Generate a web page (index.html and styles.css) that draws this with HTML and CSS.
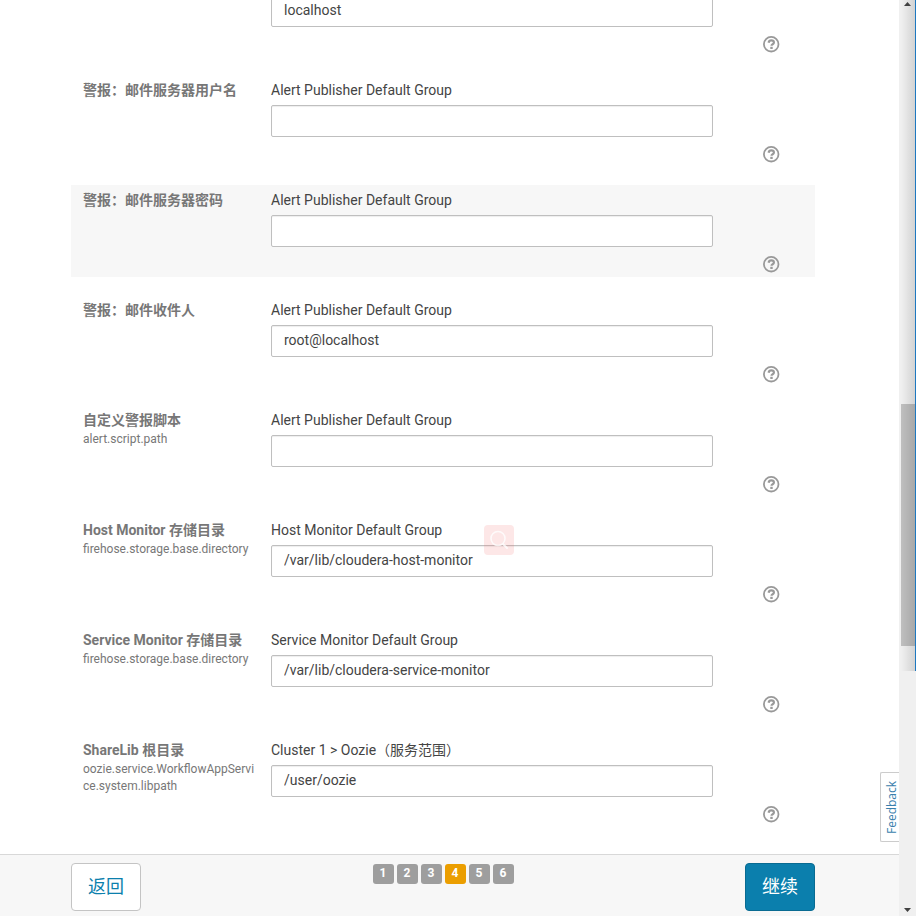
FILE: index.html
```html
<!DOCTYPE html>
<html lang="zh-CN">
<head>
<meta charset="utf-8">
<title>Cluster Setup</title>
<link rel="stylesheet" href="styles.css">
</head>
<body>
<svg class="sprite" aria-hidden="true">
  <symbol id="help" viewBox="0 0 17 17">
    <circle cx="8.2" cy="8.2" r="7.3" fill="none" stroke="currentColor" stroke-width="1.8"/>
    <path d="M5.600 6.700C5.900 5.100 6.900 4.400 8.300 4.400c1.600 0 2.600.8 2.600 2.100 0 1.800-2.400 1.700-2.400 3.300" fill="none" stroke="currentColor" stroke-width="2.2"/>
    <rect x="7.300" y="10.800" width="2.400" height="2.200" fill="currentColor"/>
  </symbol>
</svg>
<div class="window">
  <div class="page">
    <main class="content">
      <section class="row">
        <div class="name"></div>
        <div class="field"><input class="input" type="text" aria-label="邮件服务器" value="localhost"></div>
        <button class="help" type="button" aria-label="帮助"><svg class="help-icon"><use href="#help"/></svg></button>
      </section>
      <section class="row">
        <div class="name"><h2 class="title">警报：邮件服务器用户名</h2></div>
        <div class="field"><label class="group" for="f1">Alert Publisher Default Group</label><input class="input" id="f1" type="text"></div>
        <button class="help" type="button" aria-label="帮助"><svg class="help-icon"><use href="#help"/></svg></button>
      </section>
      <section class="row row-active">
        <div class="name"><h2 class="title">警报：邮件服务器密码</h2></div>
        <div class="field"><label class="group" for="f2">Alert Publisher Default Group</label><input class="input" id="f2" type="password"></div>
        <button class="help" type="button" aria-label="帮助"><svg class="help-icon"><use href="#help"/></svg></button>
      </section>
      <section class="row">
        <div class="name"><h2 class="title">警报：邮件收件人</h2></div>
        <div class="field"><label class="group" for="f3">Alert Publisher Default Group</label><input class="input" id="f3" type="text" value="root@localhost"></div>
        <button class="help" type="button" aria-label="帮助"><svg class="help-icon"><use href="#help"/></svg></button>
      </section>
      <section class="row">
        <div class="name"><h2 class="title">自定义警报脚本</h2><p class="key">alert.script.path</p></div>
        <div class="field"><label class="group" for="f4">Alert Publisher Default Group</label><input class="input" id="f4" type="text"></div>
        <button class="help" type="button" aria-label="帮助"><svg class="help-icon"><use href="#help"/></svg></button>
      </section>
      <section class="row">
        <div class="name"><h2 class="title">Host Monitor 存储目录</h2><p class="key">firehose.storage.base.directory</p></div>
        <div class="field">
          <label class="group" for="f5">Host Monitor Default Group</label><input class="input" id="f5" type="text" value="/var/lib/cloudera-host-monitor">
          <span class="search-badge">
            <svg class="search-icon" viewBox="0 0 30 30" aria-hidden="true"><circle cx="14" cy="13.500" r="7" fill="none" stroke="#fff" stroke-width="1.6"/><path d="M19 19l4 4" stroke="#fff" stroke-width="2" stroke-linecap="round"/></svg>
          </span>
        </div>
        <button class="help" type="button" aria-label="帮助"><svg class="help-icon"><use href="#help"/></svg></button>
      </section>
      <section class="row">
        <div class="name"><h2 class="title">Service Monitor 存储目录</h2><p class="key">firehose.storage.base.directory</p></div>
        <div class="field"><label class="group" for="f6">Service Monitor Default Group</label><input class="input" id="f6" type="text" value="/var/lib/cloudera-service-monitor"></div>
        <button class="help" type="button" aria-label="帮助"><svg class="help-icon"><use href="#help"/></svg></button>
      </section>
      <section class="row">
        <div class="name"><h2 class="title">ShareLib 根目录</h2><p class="key">oozie.service.WorkflowAppService.system.libpath</p></div>
        <div class="field"><label class="group" for="f7">Cluster 1 &gt; Oozie（服务范围）</label><input class="input" id="f7" type="text" value="/user/oozie"></div>
        <button class="help" type="button" aria-label="帮助"><svg class="help-icon"><use href="#help"/></svg></button>
      </section>
    </main>
    <footer class="footer">
      <button class="btn" type="button">返回</button>
      <ol class="steps">
        <li class="step">1</li>
        <li class="step">2</li>
        <li class="step">3</li>
        <li class="step step-current" aria-current="step">4</li>
        <li class="step">5</li>
        <li class="step">6</li>
      </ol>
      <button class="btn btn-primary" type="button">继续</button>
    </footer>
    <a class="feedback" href="#feedback">Feedback</a>
  </div>
  <div class="scrollbar" aria-hidden="true">
    <div class="edge"></div>
    <svg class="arrow" viewBox="0 0 7 4"><path d="M0 4L3.500 0L7 4z" fill="#404040"/></svg>
    <div class="track"><div class="thumb"></div></div>
    <svg class="arrow" viewBox="0 0 7 4"><path d="M0 0L3.500 4L7 0z" fill="#404040"/></svg>
  </div>
</div>
</body>
</html>
```
FILE: styles.css
```css
* {
  box-sizing: border-box;
}

body {
  margin: 0;
  background: #fff;
  color: #444;
  font: 14px/20px Roboto, "Noto Sans CJK SC", sans-serif;
}

.sprite {
  display: none;
}

.window {
  display: flex;
  height: 100vh;
  overflow: hidden;
}

.page {
  position: relative;
  display: flex;
  flex: 1;
  flex-direction: column;
  min-width: 0;
}

.content {
  display: flex;
  flex: 1;
  flex-direction: column;
  justify-content: flex-end;
  gap: 18px;
  min-height: 0;
  padding: 0 84px 27px 71px;
  overflow: hidden;
}

.row {
  display: grid;
  flex-shrink: 0;
  grid-template-columns: 188px 1fr 102px;
  padding: 5px 0 0 12px;
}

.row-active {
  background: #f7f7f7;
}

.name {
  padding-right: 16px;
}

.title {
  margin: 0;
  color: #777;
  font-size: 14px;
  font-weight: 700;
  line-height: 20px;
}

.key {
  margin: 1px 0 0;
  color: #777;
  font-size: 12px;
  line-height: 17px;
  overflow-wrap: anywhere;
}

.field {
  position: relative;
  display: flex;
  flex-direction: column;
  gap: 5px;
  padding-bottom: 30px;
}

.input {
  width: 100%;
  height: 32px;
  margin: 0;
  padding: 0 12px 2px;
  border: 1px solid #bfbfbf;
  border-radius: 2px;
  outline: 0;
  background: #fff;
  box-shadow: inset 0 1px 1px #eee;
  color: #444;
  font: inherit;
}

.help {
  align-self: end;
  justify-self: start;
  width: 17px;
  height: 17px;
  margin: 0 0 4px 50px;
  padding: 0;
  border: 0;
  background: none;
  color: #999;
}

.help-icon {
  display: block;
  width: 17px;
  height: 17px;
}

.search-badge {
  position: absolute;
  top: 5px;
  left: calc(50% - 8px);
  width: 30px;
  height: 30px;
  border-radius: 4px;
  background: rgba(244, 110, 110, 0.17);
}

.search-icon {
  display: block;
  opacity: 0.8;
}

.footer {
  display: flex;
  align-items: flex-start;
  justify-content: space-between;
  height: 62px;
  padding: 8px 84px 0 71px;
  border-top: 1px solid #d8d8d8;
  background: #f7f7f7;
}

.btn {
  height: 48px;
  padding: 0 16px;
  border: 1px solid #c4c4c4;
  border-radius: 4px;
  background: #fff;
  color: #0b7fad;
  font: 18px/24px Roboto, "Noto Sans CJK SC", sans-serif;
}

.btn-primary {
  border-color: #096b92;
  background: #0b7fad;
  color: #fff;
}

.steps {
  display: flex;
  gap: 3px;
  margin: 1px 0 0;
  padding: 0;
  list-style: none;
}

.step {
  width: 21px;
  height: 20px;
  border-radius: 3px;
  background: #9e9e9e;
  color: #fff;
  font-size: 12px;
  font-weight: 700;
  line-height: 18px;
  text-align: center;
}

.step-current {
  background: #eb9e00;
}

.feedback {
  position: absolute;
  right: 0;
  bottom: 74px;
  width: 19px;
  height: 70px;
  border: 1px solid #ccc;
  border-left: 0;
  border-radius: 0 2px 2px 0;
  background: #fff;
  color: #3a7fad;
  font: 12px/14px "Open Sans", sans-serif;
  text-align: center;
  text-decoration: none;
  writing-mode: vertical-lr;
  transform: rotate(180deg);
}

.scrollbar {
  position: relative;
  display: flex;
  flex-direction: column;
  align-items: center;
  justify-content: space-between;
  width: 17px;
  padding: 2px 0 4px;
  background: #f0f0f0;
}

.edge {
  position: absolute;
  inset: 0 0 auto auto;
  z-index: 1;
  width: 15px;
  height: 73.2%;
  border-right: 1px solid #1e78c0;
  background: linear-gradient(to right, rgba(0, 0, 0, 0), rgba(0, 0, 0, 0.12)) padding-box;
}

.arrow {
  z-index: 2;
  width: 7px;
  height: 4px;
}

.track {
  display: flex;
  flex: 1;
  flex-direction: column;
  align-self: stretch;
  padding: 0 1px 0 2px;
}

.thumb {
  flex: 0 0 242px;
  margin-top: auto;
  margin-bottom: 262px;
  background: #bfbfbf;
}
```
